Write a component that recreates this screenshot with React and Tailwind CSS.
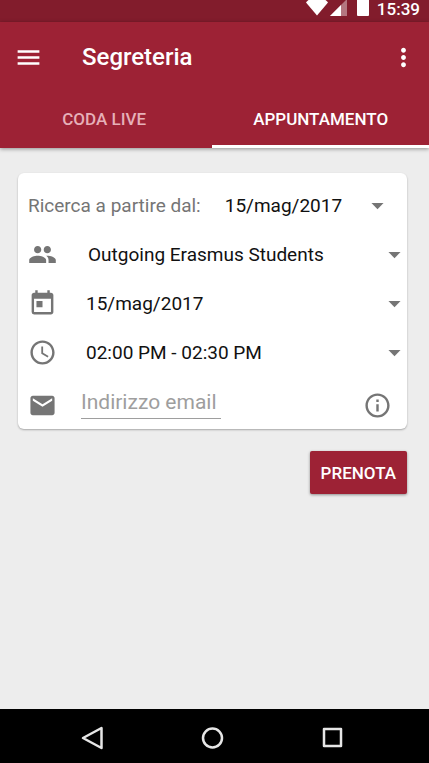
import React, { useState } from 'react';
import {
  MdAccessTime,
  MdArrowDropDown,
  MdEmail,
  MdInfoOutline,
  MdMenu,
  MdMoreVert,
  MdPeople,
  MdToday,
} from 'react-icons/md';

const ICON_SIZE = 29;

const StatusBar = () => (
  <div className="h-[22px] bg-[#821c2c] flex items-start justify-end pr-[9px] text-white">
    {/* Wifi */}
    <svg className="mr-0.5" width="22" height="16" viewBox="0 0 22 16" fill="currentColor">
      <path d="M0 2.500 Q1 1 2.500 0 H19.500 Q21 1 22 2.500 L11 15.500 Z" />
    </svg>
    {/* Signal */}
    <svg className="mr-[10px]" width="17" height="16" viewBox="0 0 17 16" fill="currentColor">
      <path d="M0 16 L16 0 H17 V16 Z" opacity="0.4" />
      <path d="M0 16 L11 5 V16 Z" />
    </svg>
    {/* Battery */}
    <svg className="mr-2" width="12" height="16" viewBox="0 0 12 16" fill="currentColor">
      <path d="M0 0 H12 V15 Q12 16 11 16 H1 Q0 16 0 15 Z" />
    </svg>
    <span className="text-[17px] leading-[18px] font-medium">15:39</span>
  </div>
);

const Select = ({ id, label, options, className }) => (
  <div className="relative flex-1 h-full flex items-center">
    <select
      id={id}
      aria-label={label}
      className={`appearance-none w-full h-full pt-0.5 bg-transparent text-[19px] text-[#111111] outline-none ${className}`}
    >
      {options.map((option) => (
        <option key={option}>{option}</option>
      ))}
    </select>
    <MdArrowDropDown
      size={ICON_SIZE}
      className="absolute -right-0.5 text-[#757575] pointer-events-none"
    />
  </div>
);

const rows = [
  { id: 'service', label: 'Servizio', icon: MdPeople, value: 'Outgoing Erasmus Students', pad: 'pl-[31px]' },
  { id: 'day', label: 'Giorno', icon: MdToday, value: '15/mag/2017', pad: 'pl-[29px]' },
  { id: 'time', label: 'Orario', icon: MdAccessTime, value: '02:00 PM - 02:30 PM', pad: 'pl-[29px]' },
];

const App = () => {
  const [tab, setTab] = useState('appuntamento');
  const [email, setEmail] = useState('');

  const tabClass = (name) =>
    name === tab
      ? 'text-white border-white'
      : 'text-[#e6b0b8] border-transparent';

  return (
    <div className="min-h-screen flex flex-col bg-[#ededed] font-['Roboto',sans-serif]">
      <StatusBar />

      {/* App bar with tabs */}
      <header className="bg-[#9d2235] text-white shadow-[0_1px_4px_rgba(0,0,0,0.4)]">
        <div className="h-[70px] pl-[14px] pr-[11px] flex items-center">
          <button aria-label="Menu">
            <MdMenu size={ICON_SIZE} />
          </button>
          <h1 className="flex-1 ml-[39px] text-[24px] font-medium">Segreteria</h1>
          <button aria-label="Altro">
            <MdMoreVert size={ICON_SIZE} />
          </button>
        </div>
        <nav className="h-14 grid grid-cols-[49fr_50fr] text-[17px] font-medium">
          <button
            onClick={() => setTab('coda')}
            className={`pt-0.5 pr-1 border-b-3 ${tabClass('coda')}`}
          >
            CODA LIVE
          </button>
          <button
            onClick={() => setTab('appuntamento')}
            className={`pt-0.5 border-b-3 ${tabClass('appuntamento')}`}
          >
            APPUNTAMENTO
          </button>
        </nav>
      </header>

      <main className="flex-1 pt-[25px] pl-[18px] pr-[22px]">
        <form onSubmit={(e) => e.preventDefault()}>
          <div className="bg-white rounded-md pt-2 pl-[10px] shadow-[0_1px_2px_rgba(0,0,0,0.3)]">
            <div className="h-[49px] pr-[17px] flex items-center">
              <label htmlFor="from" className="pt-0.5 text-[19px] text-[#757575]">
                Ricerca a partire dal:
              </label>
              <Select id="from" options={['15/mag/2017']} className="pl-6" />
            </div>

            {rows.map(({ id, label, icon: Icon, value, pad }) => (
              <div key={id} className="h-[49px] flex items-center">
                <Icon size={ICON_SIZE} className="text-[#757575]" />
                <Select id={id} label={label} options={[value]} className={pad} />
              </div>
            ))}

            <div className="h-[52px] pt-1 pr-[15px] flex items-center">
              <MdEmail size={ICON_SIZE} className="text-[#757575]" />
              <input
                type="email"
                aria-label="Indirizzo email"
                placeholder="Indirizzo email"
                value={email}
                onChange={(e) => setEmail(e.target.value)}
                className="ml-6 w-[140px] h-7 pb-1 text-[21px] border-b border-[#9e9e9e] placeholder:text-[#9e9e9e] outline-none"
              />
              <button type="button" aria-label="Informazioni" className="ml-auto">
                <MdInfoOutline size={ICON_SIZE} className="text-[#757575]" />
              </button>
            </div>
          </div>

          <div className="mt-[22px] flex justify-end">
            <button
              type="submit"
              className="h-[43px] px-[11px] pt-0.5 bg-[#9d2235] text-white text-[17px] font-medium rounded-xs shadow-[0_1px_3px_rgba(0,0,0,0.4)]"
            >
              PRENOTA
            </button>
          </div>
        </form>
      </main>

      {/* System navigation */}
      <footer className="h-[54px] pt-1 pr-1 bg-black flex items-center justify-center gap-[97px] text-[#e6e6e6]">
        <button aria-label="Indietro">
          <svg width="23" height="24" viewBox="0 0 23 24" fill="none" stroke="currentColor" strokeWidth="2.500" strokeLinejoin="round">
            <path d="M20.500 2 V22 L2 12 Z" />
          </svg>
        </button>
        <button aria-label="Home">
          <svg width="23" height="24" viewBox="0 0 23 24" fill="none" stroke="currentColor" strokeWidth="2.500">
            <circle cx="11.500" cy="12" r="9.500" />
          </svg>
        </button>
        <button aria-label="Recenti">
          <svg width="23" height="24" viewBox="0 0 23 24" fill="none" stroke="currentColor" strokeWidth="2.500" strokeLinejoin="round">
            <rect x="3" y="3" width="17" height="17" />
          </svg>
        </button>
      </footer>
    </div>
  );
};

export default App;
